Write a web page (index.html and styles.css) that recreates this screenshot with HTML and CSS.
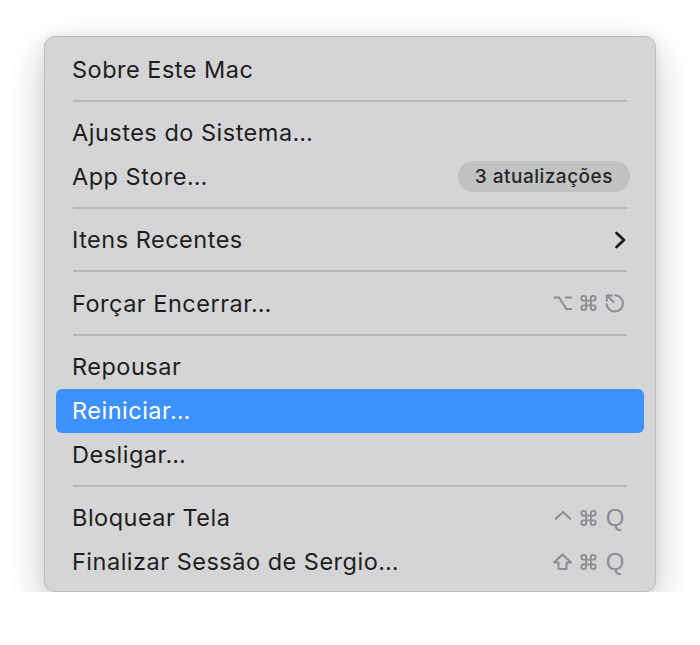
FILE: index.html
```html
<!DOCTYPE html>
<html lang="pt-BR">
<head>
<meta charset="utf-8">
<title>Menu Apple</title>
<link rel="stylesheet" href="styles.css">
</head>
<body>
<div class="menu">
  <div class="item"><span class="label">Sobre Este Mac</span></div>
  <div class="sep"></div>
  <div class="item"><span class="label">Ajustes do Sistema…</span></div>
  <div class="item"><span class="label">App Store…</span><span class="badge">3 atualizações</span></div>
  <div class="sep"></div>
  <div class="item"><span class="label">Itens Recentes</span>
    <svg class="chev" width="14" height="18" viewBox="0 0 14 18"><path d="M3.5 2 L11 9 L3.5 16" fill="none" stroke="#1e1e1e" stroke-width="2.8" stroke-linecap="round" stroke-linejoin="round"/></svg>
  </div>
  <div class="sep"></div>
  <div class="item"><span class="label">Forçar Encerrar…</span>
    <span class="keys">
      <svg class="key" width="20" height="20" viewBox="0 0 20 20"><path d="M1 4.5 H6 L13.5 16 H19 M12 4.5 H19" fill="none" stroke="#8e8e92" stroke-width="2"/></svg>
      <svg class="key" width="19" height="20" viewBox="0 0 24 24"><path d="M15 6v12a3 3 0 1 0 3-3H6a3 3 0 1 0 3 3V6a3 3 0 1 0-3 3h12a3 3 0 1 0-3-3z" fill="none" stroke="#8e8e92" stroke-width="2.4"/></svg>
      <svg class="key" width="22" height="20" viewBox="0 0 22 20"><path d="M10.5 2.2 A8.2 8.2 0 1 1 2.6 10.5" fill="none" stroke="#8e8e92" stroke-width="2"/><path d="M10 9.5 L3 2.5 M2.8 8.5 V2.5 H8.8" fill="none" stroke="#8e8e92" stroke-width="2"/></svg>
    </span>
  </div>
  <div class="sep"></div>
  <div class="item"><span class="label">Repousar</span></div>
  <div class="item selected"><span class="label">Reiniciar…</span></div>
  <div class="item"><span class="label">Desligar…</span></div>
  <div class="sep"></div>
  <div class="item"><span class="label">Bloquear Tela</span>
    <span class="keys">
      <svg class="key" width="20" height="20" viewBox="0 0 20 20"><path d="M2 11.5 L10 4 L18 11.5" fill="none" stroke="#8e8e92" stroke-width="2"/></svg>
      <svg class="key" width="19" height="20" viewBox="0 0 24 24"><path d="M15 6v12a3 3 0 1 0 3-3H6a3 3 0 1 0 3 3V6a3 3 0 1 0-3 3h12a3 3 0 1 0-3-3z" fill="none" stroke="#8e8e92" stroke-width="2.4"/></svg>
      <span class="qkey">Q</span>
    </span>
  </div>
  <div class="item"><span class="label">Finalizar Sessão de Sergio…</span>
    <span class="keys">
      <svg class="key" width="21" height="20" viewBox="0 0 21 20"><path d="M10.5 2.5 L19 10.5 H14.5 V17 H6.5 V10.5 H2 Z" fill="none" stroke="#8e8e92" stroke-width="2" stroke-linejoin="round"/></svg>
      <svg class="key" width="19" height="20" viewBox="0 0 24 24"><path d="M15 6v12a3 3 0 1 0 3-3H6a3 3 0 1 0 3 3V6a3 3 0 1 0-3 3h12a3 3 0 1 0-3-3z" fill="none" stroke="#8e8e92" stroke-width="2.4"/></svg>
      <span class="qkey">Q</span>
    </span>
  </div>
</div>
</body>
</html>
```
FILE: styles.css
```css
html, body {
  margin: 0;
  padding: 0;
  background: #ffffff;
}
body {
  padding: 36px 0 0 44px;
  font-family: Inter, "Noto Sans", "Liberation Sans", sans-serif;
}
.menu {
  box-sizing: border-box;
  width: 612px;
  background: #d5d5d7;
  border: 1px solid #bdbdc0;
  border-radius: 11px;
  padding: 10px 0 7px;
  box-shadow: 0 14px 40px rgba(0, 0, 0, 0.22), 0 0 8px rgba(0, 0, 0, 0.07);
}
.item {
  height: 44px;
  margin: 0 11px;
  padding: 0 18px 0 16px;
  border-radius: 6px;
  display: flex;
  align-items: center;
  justify-content: space-between;
  color: #1e1e1e;
  font-size: 23.5px;
  letter-spacing: 0.5px;
}
.item.selected {
  background: #3d91fd;
  color: #ffffff;
}
.sep {
  height: 19.4px;
  margin: 0 28px;
  display: flex;
  align-items: center;
}
.sep::before {
  content: "";
  display: block;
  width: 100%;
  height: 2px;
  background: #b8b8bb;
}
.badge {
  height: 31px;
  line-height: 31px;
  padding: 0 17px;
  margin-right: -4px;
  border-radius: 16px;
  background: #c2c2c4;
  color: #262626;
  font-size: 19px;
  font-weight: 500;
  letter-spacing: 0.5px;
}
.chev {
  display: block;
  margin-right: -1px;
}
.keys {
  display: flex;
  align-items: center;
  gap: 6px;
}
.key {
  display: block;
}
.qkey {
  color: #8e8e92;
  font-size: 24px;
  width: 22px;
  text-align: center;
  letter-spacing: 0;
  font-family: "Liberation Sans", Arial, sans-serif;
}
```
